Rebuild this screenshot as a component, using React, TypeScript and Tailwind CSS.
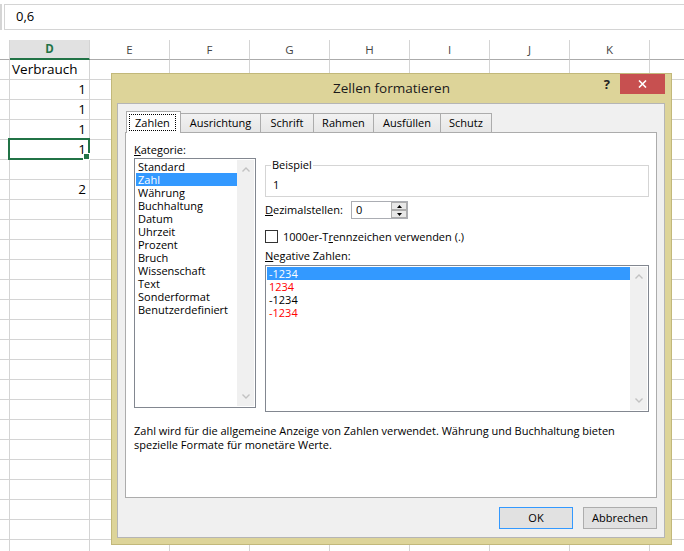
import type { ReactNode } from 'react';

const columns = ['E', 'F', 'G', 'H', 'I', 'J', 'K'];

type Row = { d?: string; left?: boolean; selected?: boolean };

const rows: Row[] = [
  { d: 'Verbrauch', left: true },
  { d: '1' },
  { d: '1' },
  { d: '1' },
  { d: '1', selected: true },
  {},
  { d: '2' },
  ...Array.from({ length: 18 }, () => ({})),
];

const kategorien = [
  'Standard',
  'Zahl',
  'Währung',
  'Buchhaltung',
  'Datum',
  'Uhrzeit',
  'Prozent',
  'Bruch',
  'Wissenschaft',
  'Text',
  'Sonderformat',
  'Benutzerdefiniert',
];

const negative = [
  { text: '-1234', color: 'text-black' },
  { text: '1234', color: 'text-[#ff0000]' },
  { text: '-1234', color: 'text-black' },
  { text: '-1234', color: 'text-[#ff0000]' },
];

const tabs = [
  { label: 'Ausrichtung', w: 'w-[81px]' },
  { label: 'Schrift', w: 'w-[54px]' },
  { label: 'Rahmen', w: 'w-[61px]' },
  { label: 'Ausfüllen', w: 'w-[68px]' },
  { label: 'Schutz', w: 'w-[52px]' },
];

function Chevron({ up }: { up?: boolean }) {
  return (
    <svg width="8" height="5" viewBox="0 0 8 5">
      <path
        d={up ? 'M0.5 4.5L4 1L7.5 4.5' : 'M0.5 0.5L4 4L7.5 0.5'}
        fill="none"
        stroke="#c2c2c2"
        strokeWidth="1.4"
      />
    </svg>
  );
}

function ListBox({
  items,
  selected,
  className = '',
}: {
  items: { text: string; color?: string }[];
  selected: number;
  className?: string;
}) {
  return (
    <div className={`flex border border-[#828790] bg-white p-px ${className}`}>
      <div className="flex-1">
        {items.map((it, i) => (
          <div
            key={i}
            className={`h-[13px] pl-[2px] leading-[13px] ${
              i === selected ? 'bg-[#3399ff] text-white' : it.color ?? 'text-black'
            }`}
          >
            {it.text}
          </div>
        ))}
      </div>
      <div className="flex w-[17px] flex-col items-center justify-between bg-[#f0f0f0] py-[7px]">
        <Chevron up />
        <Chevron />
      </div>
    </div>
  );
}

function Btn({ children, primary }: { children: ReactNode; primary?: boolean }) {
  return (
    <button
      type="button"
      className={`flex h-[22px] w-[74px] items-center justify-center border bg-[#e1e1e1] leading-[14px] ${
        primary ? 'border-[#3399ff]' : 'border-[#adadad]'
      }`}
    >
      {children}
    </button>
  );
}

function Sheet() {
  return (
    <div className="font-['Open_Sans',sans-serif] text-black">
      <div className="flex h-[40px]">
        <div className="mt-[4px] h-[26px] w-[2px] bg-[#d5d5d5]" />
        <div className="ml-[2px] mt-[4px] flex h-[26px] flex-1 items-center border-y border-l border-[#d4d4d4] pl-[11px] text-[13px]">
          0,6
        </div>
      </div>
      <div className="grid grid-cols-[10px_repeat(8,80px)_1fr] text-[11.5px] text-[#444]">
        <div className="h-[20px] border-b border-r border-b-[#ababab] border-r-[#d4d4d4]" />
        <div className="flex h-[20px] items-center justify-center border-b-2 border-r border-b-[#217346] border-r-[#d4d4d4] bg-[#e1e1e1] font-bold text-[#217346]">
          D
        </div>
        {columns.map((c) => (
          <div
            key={c}
            className="flex h-[20px] items-center justify-center border-b border-r border-b-[#ababab] border-r-[#d4d4d4]"
          >
            {c}
          </div>
        ))}
        <div className="h-[20px] border-b border-b-[#ababab]" />
      </div>
      <div className="grid grid-cols-[10px_repeat(8,80px)_1fr] text-[13.5px]">
        {rows.map((r, i) => (
          <div key={i} className="contents">
            <div className="h-[20px] border-b border-r border-[#d4d4d4]" />
            <div
              className={`relative flex h-[20px] items-center border-b border-r border-[#d4d4d4] ${
                r.left ? 'justify-start pl-[2px]' : 'justify-end pr-[3px]'
              }`}
            >
              {r.d}
              {r.selected && (
                <div className="absolute -bottom-px -left-[2px] -right-px -top-[2px] border-2 border-[#217346]">
                  <div className="absolute -bottom-[2px] -right-[2px] h-[7px] w-[7px] border border-white bg-[#217346]" />
                </div>
              )}
            </div>
            {columns.map((c) => (
              <div key={c} className="h-[20px] border-b border-r border-[#d4d4d4]" />
            ))}
            <div className="h-[20px] border-b border-[#d4d4d4]" />
          </div>
        ))}
      </div>
    </div>
  );
}

function Dialog() {
  return (
    <div className="absolute left-[111px] top-[73px] flex h-[472px] w-[561px] flex-col border border-[#c2b87a] bg-[#ddd499] font-['Open_Sans',sans-serif] text-[11px] text-black">
      <div className="grid h-[29px] grid-cols-[1fr_auto_1fr]">
        <div />
        <div className="self-center text-[13.5px] text-[#1a1a1a]">Zellen formatieren</div>
        <div className="flex items-start justify-end pr-[6px]">
          <div className="flex h-[20px] items-center">
            <span className="mr-[10px] text-[13px] font-bold leading-none text-[#222]">?</span>
            <button
              type="button"
              className="flex h-[20px] w-[45px] items-center justify-center bg-[#c75050]"
            >
              <svg width="9" height="8" viewBox="0 0 9 8">
                <path d="M1 0.5L8 7.5M8 0.5L1 7.5" stroke="white" strokeWidth="1.6" />
              </svg>
            </button>
          </div>
        </div>
      </div>

      <div className="mb-[6px] ml-[5px] mr-[6px] flex flex-1 flex-col border border-[#b5b5b5] bg-[#f0f0f0] px-[7px] pt-[7px]">
        <div className="ml-px flex h-[21px] items-end">
          <div className="relative z-10 -mb-px flex h-[22px] w-[55px] items-start border border-b-0 border-[#acacac] bg-white pl-[2px] pt-[2px]">
            <div className="h-[17px] w-[47px] border border-dotted border-black pl-[5px] leading-[15px]">
              Zahlen
            </div>
          </div>
          {tabs.map((t) => (
            <div
              key={t.label}
              className={`-ml-px flex h-[19px] items-center justify-center border border-b-0 border-[#acacac] bg-linear-to-b from-[#f2f2f2] to-[#e6e6e6] pt-px ${t.w}`}
            >
              {t.label}
            </div>
          ))}
        </div>

        <div className="h-[366px] border border-[#acacac] bg-white pl-[8px] pt-[10px]">
          <div className="flex gap-[9px]">
            <div className="w-[122px]">
              <div className="leading-[14px]">
                <span className="underline">K</span>ategorie:
              </div>
              <ListBox
                className="mt-px h-[250px]"
                items={kategorien.map((k) => ({ text: k }))}
                selected={1}
              />
            </div>
            <div className="w-[384px]">
              <fieldset className="mt-[15px] border border-[#d5d5d5]">
                <legend className="ml-[5px] px-px leading-[14px]">Beispiel</legend>
                <div className="pb-[4px] pl-[7px] pt-[6px] leading-[14px]">1</div>
              </fieldset>
              <div className="mt-[4px] flex h-[18px] items-center">
                <div className="w-[86px] leading-[14px]">
                  <span className="underline">D</span>ezimalstellen:
                </div>
                <div className="flex h-[18px] w-[57px] border border-[#abadb3] bg-white">
                  <div className="flex-1 pl-[4px] leading-[16px]">0</div>
                  <div className="flex w-[16px] flex-col justify-between">
                    <div className="flex h-[8px] items-center justify-center border border-[#acacac] bg-[#e8e8e8]">
                      <svg width="5" height="3" viewBox="0 0 5 3">
                        <path d="M0 3L2.5 0L5 3Z" fill="black" />
                      </svg>
                    </div>
                    <div className="flex h-[8px] items-center justify-center border border-[#acacac] bg-[#e8e8e8]">
                      <svg width="5" height="3" viewBox="0 0 5 3">
                        <path d="M0 0L2.5 3L5 0Z" fill="black" />
                      </svg>
                    </div>
                  </div>
                </div>
              </div>
              <div className="mt-[11px] flex h-[13px] items-center">
                <div className="h-[13px] w-[13px] border border-[#333] bg-white" />
                <div className="ml-[5px] leading-[14px]">
                  1000er-T<span className="underline">r</span>ennzeichen verwenden (.)
                </div>
              </div>
              <div className="mt-[6px] leading-[14px]">
                <span className="underline">N</span>egative Zahlen:
              </div>
              <ListBox className="mt-[2px] h-[147px]" items={negative} selected={0} />
            </div>
          </div>
          <div className="mt-[12px] whitespace-nowrap leading-[14px]">
            Zahl wird für die allgemeine Anzeige von Zahlen verwendet. Währung und Buchhaltung bieten
            <br />
            spezielle Formate für monetäre Werte.
          </div>
        </div>

        <div className="mt-[9px] flex justify-end gap-[10px]">
          <Btn primary>OK</Btn>
          <Btn>Abbrechen</Btn>
        </div>
      </div>
    </div>
  );
}

export default function App() {
  return (
    <div className="relative h-[551px] w-[684px] overflow-hidden bg-white">
      <Sheet />
      <Dialog />
    </div>
  );
}
